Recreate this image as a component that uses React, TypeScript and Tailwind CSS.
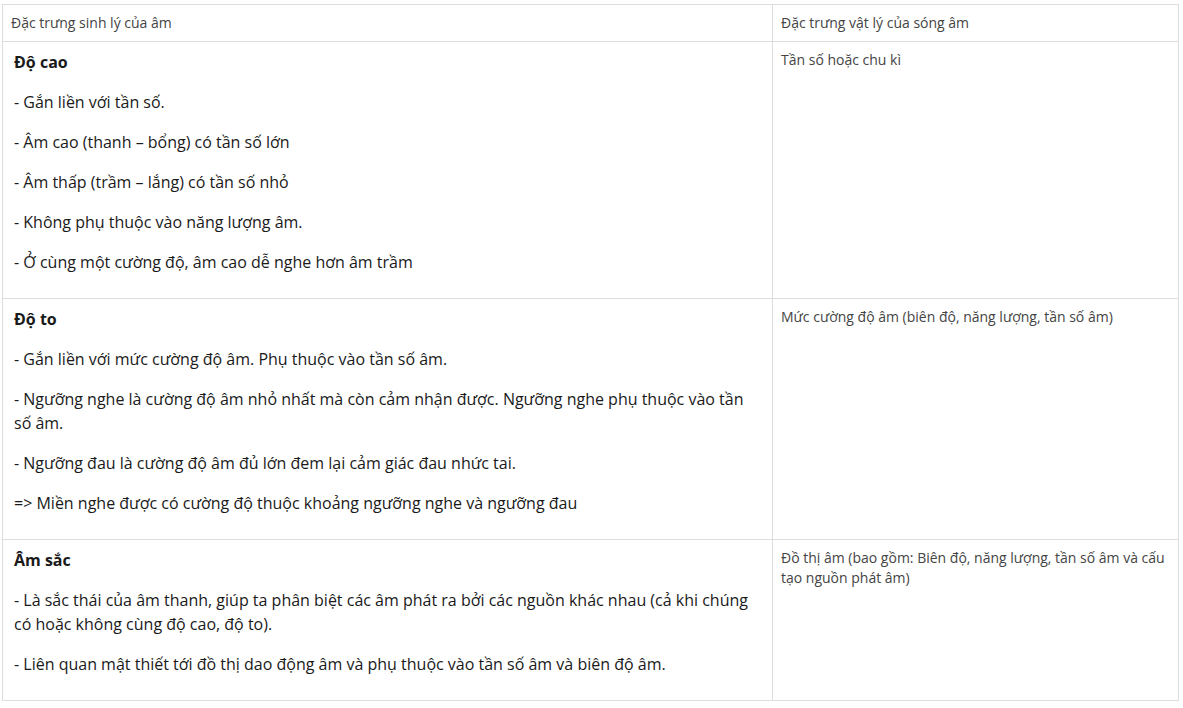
import React from 'react';

interface Row {
  title: string;
  lines: string[];
  physical: string;
}

const rows: Row[] = [
  {
    title: 'Độ cao',
    lines: [
      '- Gắn liền với tần số.',
      '- Âm cao (thanh – bổng) có tần số lớn',
      '- Âm thấp (trầm – lắng) có tần số nhỏ',
      '- Không phụ thuộc vào năng lượng âm.',
      '- Ở cùng một cường độ, âm cao dễ nghe hơn âm trầm',
    ],
    physical: 'Tần số hoặc chu kì',
  },
  {
    title: 'Độ to',
    lines: [
      '- Gắn liền với mức cường độ âm. Phụ thuộc vào tần số âm.',
      '- Ngưỡng nghe là cường độ âm nhỏ nhất mà còn cảm nhận được. Ngưỡng nghe phụ thuộc vào tần số âm.',
      '- Ngưỡng đau là cường độ âm đủ lớn đem lại cảm giác đau nhức tai.',
      '=> Miền nghe được có cường độ thuộc khoảng ngưỡng nghe và ngưỡng đau',
    ],
    physical: 'Mức cường độ âm (biên độ, năng lượng, tần số âm)',
  },
  {
    title: 'Âm sắc',
    lines: [
      '- Là sắc thái của âm thanh, giúp ta phân biệt các âm phát ra bởi các nguồn khác nhau (cả khi chúng có hoặc không cùng độ cao, độ to).',
      '- Liên quan mật thiết tới đồ thị dao động âm và phụ thuộc vào tần số âm và biên độ âm.',
    ],
    physical: 'Đồ thị âm (bao gồm: Biên độ, năng lượng, tần số âm và cấu tạo nguồn phát âm)',
  },
];

const App: React.FC = () => {
  return (
    <div className="min-h-[708px] bg-white pt-1 pl-[2px] font-['Open_Sans',sans-serif]">
      <table className="w-[1177px] table-fixed border-collapse border border-[#dddddd]">
        <colgroup>
          <col className="w-[770px]" />
          <col />
        </colgroup>
        <thead>
          <tr>
            <th className="border border-[#dddddd] px-2 py-2 text-left text-sm leading-5 font-normal text-[#444]">
              Đặc trưng sinh lý của âm
            </th>
            <th className="border border-[#dddddd] px-2 py-2 text-left text-sm leading-5 font-normal text-[#444]">
              Đặc trưng vật lý của sóng âm
            </th>
          </tr>
        </thead>
        <tbody>
          {rows.map((row, i) => (
            <tr key={i}>
              <td className="border border-[#dddddd] pl-[11px] pr-2 py-2 align-top text-base leading-6 text-[#1a1a1a]">
                <p className="mb-4 font-bold">{row.title}</p>
                {row.lines.map((line, j) => (
                  <p key={j} className="mb-4">
                    {line}
                  </p>
                ))}
              </td>
              <td className="border border-[#dddddd] px-2 py-2 align-top text-sm leading-5 text-[#444]">
                {row.physical}
              </td>
            </tr>
          ))}
        </tbody>
      </table>
    </div>
  );
};

export default App;
